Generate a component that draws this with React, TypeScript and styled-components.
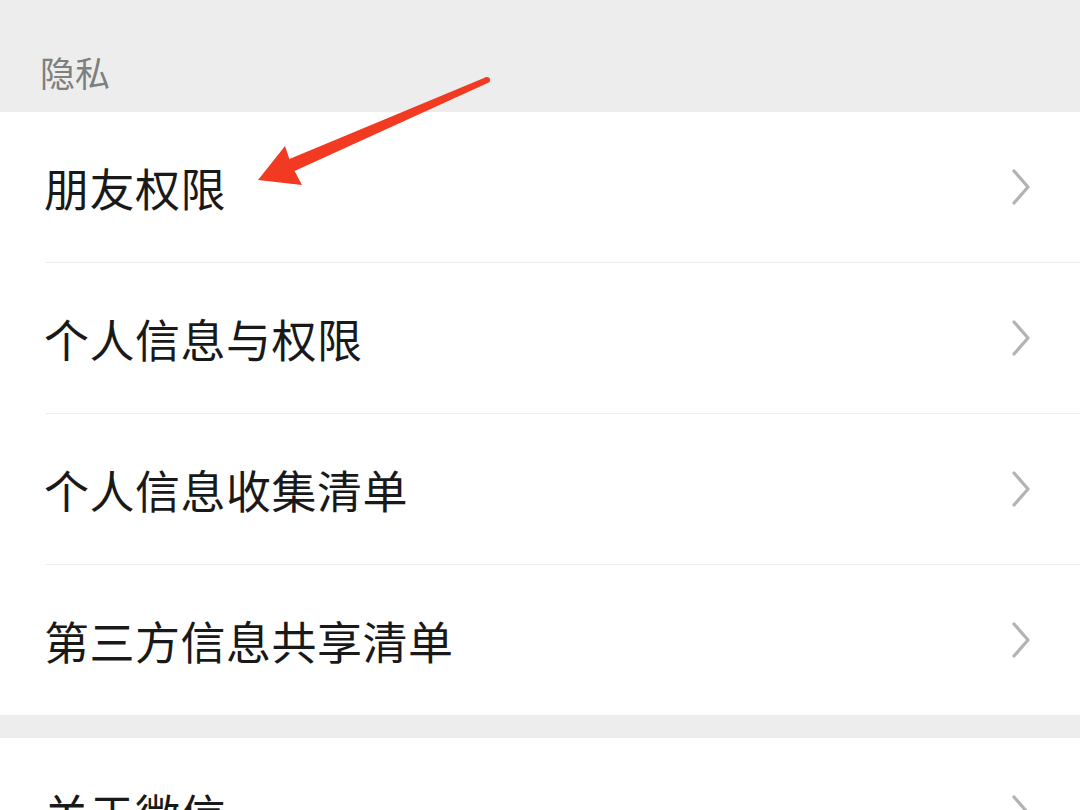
import React from 'react'
import styled, { createGlobalStyle } from 'styled-components'

const GlobalStyle = createGlobalStyle`
  html, body {
    margin: 0;
    padding: 0;
    background: #ededed;
    font-family: "Noto Sans CJK SC", "Noto Sans", sans-serif;
  }
`

const Page = styled.div`
  position: relative;
  width: 1080px;
  height: 810px;
  overflow: hidden;
  background: #ededed;
`

const SectionTitle = styled.div`
  height: 112px;
  box-sizing: border-box;
  padding: 50px 0 0 40px;
  font-size: 35px;
  line-height: 44px;
  color: #7f7f7f;
`

const Group = styled.div<{ $gap?: number }>`
  background: #ffffff;
  margin-top: ${(p) => p.$gap ?? 0}px;
`

const Row = styled.div`
  padding-left: 46px;
  &:last-child > div {
    border-bottom: none;
  }
`

const RowInner = styled.div`
  height: 150px;
  display: flex;
  align-items: center;
  justify-content: space-between;
  padding-right: 48px;
  border-bottom: 1px solid #ececec;
`

const Label = styled.span`
  font-size: 45px;
  color: #191919;
  letter-spacing: 0.5px;
  margin-left: -2px;
`

const Chevron = () => (
  <svg width="22" height="38" viewBox="0 0 22 38">
    <path
      d="M4 3 L18 19 L4 35"
      fill="none"
      stroke="#b3b3b3"
      strokeWidth="3.2"
      strokeLinecap="round"
      strokeLinejoin="round"
    />
  </svg>
)

const ArrowLayer = styled.svg`
  position: absolute;
  left: 0;
  top: 0;
  pointer-events: none;
`

const items = ['朋友权限', '个人信息与权限', '个人信息收集清单', '第三方信息共享清单']

export default function App() {
  return (
    <>
      <GlobalStyle />
      <Page>
        <SectionTitle>隐私</SectionTitle>
        <Group>
          {items.map((label) => (
            <Row key={label}>
              <RowInner>
                <Label>{label}</Label>
                <Chevron />
              </RowInner>
            </Row>
          ))}
        </Group>
        <Group $gap={23}>
          <Row>
            <RowInner>
              <Label>关于微信</Label>
              <Chevron />
            </RowInner>
          </Row>
        </Group>
        <ArrowLayer width="1080" height="810" viewBox="0 0 1080 810">
          <circle cx="487" cy="80" r="3" fill="#f23a22" />
          <polygon
            points="485.8,77.3 488.2,82.7 294.6,171 302,185 258,180 285,146 289.4,159"
            fill="#f23a22"
          />
        </ArrowLayer>
      </Page>
    </>
  )
}
